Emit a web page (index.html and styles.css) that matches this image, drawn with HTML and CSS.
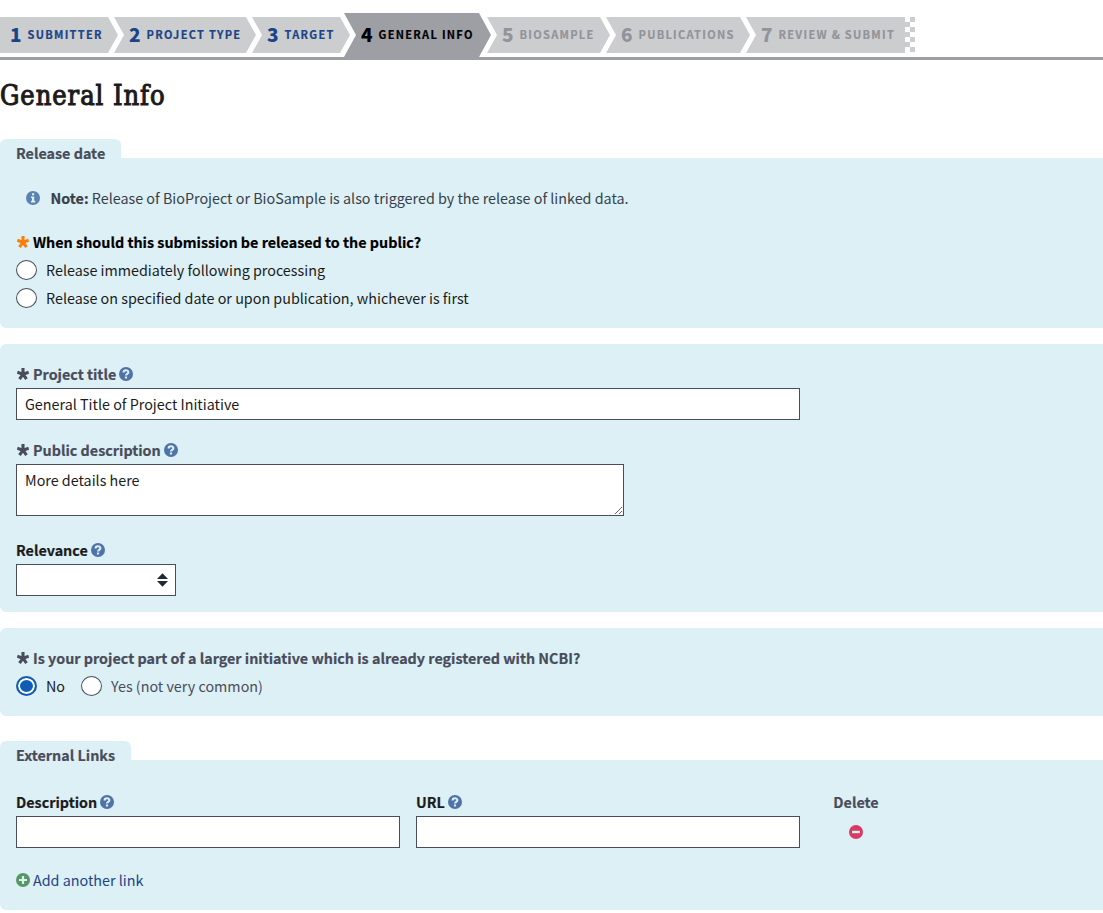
FILE: index.html
```html
<!DOCTYPE html>
<html lang="en">
<head>
<meta charset="utf-8">
<title>General Info</title>
<link rel="stylesheet" href="styles.css">
</head>
<body>
<svg class="defs" width="0" height="0">
  <symbol id="star" viewBox="0 0 12 12"><g stroke="currentColor" stroke-width="3.1"><path d="M6 6.2V0M6 6.2L.3 4.3M6 6.2l5.7-1.9M6 6.2l-3.5 4.9M6 6.2l3.5 4.9"/></g></symbol>
  <symbol id="help" viewBox="0 0 14 14"><circle cx="7" cy="7" r="7" fill="#4f73a8"/><path d="M4.6 5.4C4.6 2.5 9.4 2.6 9.4 5.2 9.4 6.8 7 6.8 7 8.5" fill="none" stroke="#ddf0f6" stroke-width="2.1"/><path d="M5.9 9.5h2.2v2H5.9z" fill="#ddf0f6"/></symbol>
  <symbol id="info" viewBox="0 0 14 14"><circle cx="7" cy="7" r="7" fill="#5b82b0"/><path d="M6 2.2h2.2v2H6zM5 5.4h3.2v4.4h1v1.6H5V9.8h1V7H5z" fill="#ddf0f6"/></symbol>
  <symbol id="plus" viewBox="0 0 14 14"><circle cx="7" cy="7" r="7" fill="#559864"/><path d="M7 3v8M3 7h8" stroke="#ddf0f6" stroke-width="2.2"/></symbol>
  <symbol id="minus" viewBox="0 0 14 14"><circle cx="7" cy="7" r="7" fill="#d93a62"/><path d="M3 7h8" stroke="#ddf0f6" stroke-width="2.4"/></symbol>
</svg>

<nav class="steps">
  <a class="step first w1"><b>1</b><span>SUBMITTER</span></a>
  <a class="step w2"><b>2</b><span>PROJECT TYPE</span></a>
  <a class="step w3"><b>3</b><span>TARGET</span></a>
  <a class="step active w4"><b>4</b><span>GENERAL INFO</span></a>
  <a class="step todo w5"><b>5</b><span>BIOSAMPLE</span></a>
  <a class="step todo w6"><b>6</b><span>PUBLICATIONS</span></a>
  <a class="step todo last w7"><b>7</b><span>REVIEW &amp; SUBMIT</span></a>
  <i class="flag"></i>
</nav>

<h1><span>General Info</span></h1>

<section class="tabbed">
  <h2 class="tab">Release date</h2>
  <div class="panel release">
    <p class="note"><svg class="ic"><use href="#info"/></svg><span><b>Note:</b> Release of BioProject or BioSample is also triggered by the release of linked data.</span></p>
    <div class="label black"><svg class="star orange"><use href="#star"/></svg><span>When should this submission be released to the public?</span></div>
    <label class="option"><i class="radio"></i><span>Release immediately following processing</span></label>
    <label class="option"><i class="radio"></i><span>Release on specified date or upon publication, whichever is first</span></label>
  </div>
</section>

<section class="panel details">
  <div class="label"><svg class="star"><use href="#star"/></svg><span>Project title</span><svg class="ic"><use href="#help"/></svg></div>
  <input class="field title" type="text" value="General Title of Project Initiative">
  <div class="label"><svg class="star"><use href="#star"/></svg><span>Public description</span><svg class="ic"><use href="#help"/></svg></div>
  <textarea class="field area">More details here</textarea>
  <div class="label dark"><span>Relevance</span><svg class="ic"><use href="#help"/></svg></div>
  <div class="field select"><svg width="11" height="14" viewBox="0 0 11 14"><path d="M5.5 .3L11 6H0zM0 8h11L5.5 13.7z" fill="#212a38"/></svg></div>
</section>

<section class="panel initiative">
  <div class="label"><svg class="star"><use href="#star"/></svg><span>Is your project part of a larger initiative which is already registered with NCBI?</span></div>
  <div class="row">
    <label class="option"><i class="radio on"></i><span>No</span></label>
    <label class="option muted"><i class="radio"></i><span>Yes (not very common)</span></label>
  </div>
</section>

<section class="tabbed links">
  <h2 class="tab">External Links</h2>
  <div class="panel external">
    <div class="grid">
      <div class="label dark"><span>Description</span><svg class="ic"><use href="#help"/></svg></div>
      <div class="label dark"><span>URL</span><svg class="ic"><use href="#help"/></svg></div>
      <div class="label center"><span>Delete</span></div>
      <input class="field" type="text">
      <input class="field" type="text">
      <div class="center remove"><svg class="ic"><use href="#minus"/></svg></div>
    </div>
    <a class="add"><svg class="ic"><use href="#plus"/></svg><span>Add another link</span></a>
  </div>
</section>
</body>
</html>
```
FILE: styles.css
```css
* { box-sizing: border-box; }
body {
  margin: 0;
  height: 913px;
  overflow: hidden;
  background: #fff;
  color: #1b1b1b;
  font: 14.33px/20px "Noto Sans CJK SC", "Noto Sans", sans-serif;
}
.defs { display: block; }
svg { flex: none; }

.steps {
  display: flex;
  align-items: center;
  height: 60px;
  padding-top: 13px;
  border-bottom: 3px solid #9e9ea5;
}
.step {
  display: flex;
  align-items: center;
  flex: none;
  height: 36px;
  margin-left: -4px;
  padding: 0 0 2px 15px;
  background: #cccdcf;
  color: #1b4488;
  font-weight: 700;
  white-space: nowrap;
  clip-path: polygon(0 0, calc(100% - 10px) 0, 100% 50%, calc(100% - 10px) 100%, 0 100%, 10px 50%);
}
.step b { width: 17.5px; font-size: 19px; line-height: 34px; }
.step span { font-size: 11px; letter-spacing: 1.3px; -webkit-text-stroke: .2px; }
.step.first { margin-left: 0; padding-left: 10px; clip-path: polygon(0 0, 108px 0, 100% 50%, 108px 100%, 0 100%); }
.step.active {
  height: 44px;
  margin-left: -6px;
  padding-left: 17px;
  background: #9e9ea5;
  color: #000;
  clip-path: polygon(0 0, calc(100% - 12px) 0, 100% 50%, calc(100% - 12px) 100%, 0 100%, 12px 50%);
}
.step.todo { color: #92939b; }
.step.last { clip-path: polygon(0 0, 100% 0, 100% 100%, 0 100%, 10px 50%); }
.w1 { width: 118px; }
.w2 { width: 142px; }
.w3 { width: 98px; }
.w4 { width: 147px; }
.w5 { width: 123px; }
.w6 { width: 144px; }
.w7 { width: 159px; }
.flag {
  width: 10px;
  height: 35px;
  margin-bottom: 1px;
  background: conic-gradient(#cccdcf 25%, #fff 0 50%, #cccdcf 0 75%, #fff 0) 0 0 / 10px 10px;
}

h1 {
  height: 79px;
  margin: 0;
  padding-top: 16px;
  font: 400 27px/40px "DejaVu Serif Condensed", "DejaVu Serif", serif;
  letter-spacing: .95px;
  -webkit-text-stroke: 1px #1b1b1b;
}

.panel { padding: 0 16px; background: #ddf0f6; border-radius: 6px 0 0 6px; }
.tabbed .panel { border-radius: 0 0 0 6px; }
.tab {
  width: max-content;
  height: 19px;
  margin: 0;
  padding: 4px 16px 0;
  background: #ddf0f6;
  border-radius: 6px 6px 0 0;
  color: #494c5a;
  font-size: 14.33px;
  line-height: 20px;
}
.ic { width: 14px; height: 14px; }
.star { width: 12px; height: 12px; margin: 0 4px 1px 1px; }
.orange { color: #fa7e0a; }
.label {
  display: flex;
  align-items: center;
  height: 20px;
  color: #494c5a;
  font-weight: 700;
}
.label, .tab, .note b { -webkit-text-stroke: .2px; }
.label svg { -webkit-text-stroke: 0; }
.label .ic { margin-left: 3px; }
.label.black { color: #000; }
.label.dark { color: #1b1b1b; }

.release { height: 170px; padding-top: 30px; }
.note { display: flex; align-items: center; margin: 0 0 24px; padding-left: 10px; height: 20px; color: #37404a; }
.note span { margin-left: 10.5px; }
.option { display: flex; align-items: center; height: 28px; }
.release .option:nth-of-type(1) { margin-top: 4px; }
.radio {
  width: 21px;
  height: 20px;
  margin-right: 9px;
  border: 1px solid #494c5a;
  border-radius: 50%;
  background: #fff;
}
.radio.on { border: 2px solid #0f5cb5; background: #0f5cb5; box-shadow: inset 0 0 0 2px #fff; }
.muted { color: #494c5a; }

.details { height: 268px; margin-top: 16px; padding-top: 20px; }
.field {
  display: block;
  width: 100%;
  height: 32px;
  margin: 4px 0 0;
  padding: 0 8px;
  border: 1px solid #494c5a;
  border-radius: 0;
  background: #fff;
  color: #1b1b1b;
  font: inherit;
  outline: 0;
}
.title { width: 784px; margin-bottom: 20px; padding-bottom: 2px; }
.area { width: 608px; height: 52px; margin-bottom: 24px; padding-top: 5px; overflow: hidden; }
.select { display: flex; align-items: center; justify-content: flex-end; width: 160px; padding: 0 7px; }

.initiative { height: 88px; margin-top: 16px; padding-top: 20px; }
.initiative .row { display: flex; gap: 16px; margin-top: 4px; }

.links { margin-top: 25px; }
.external { height: 150px; padding-top: 32px; }
.grid { display: grid; grid-template-columns: 384px 384px 80px; column-gap: 16px; }
.center { display: flex; align-items: center; justify-content: center; }
.remove { padding-top: 4px; }
.add { display: flex; align-items: center; gap: 3px; height: 20px; margin-top: 22px; color: #1b4488; }
```
